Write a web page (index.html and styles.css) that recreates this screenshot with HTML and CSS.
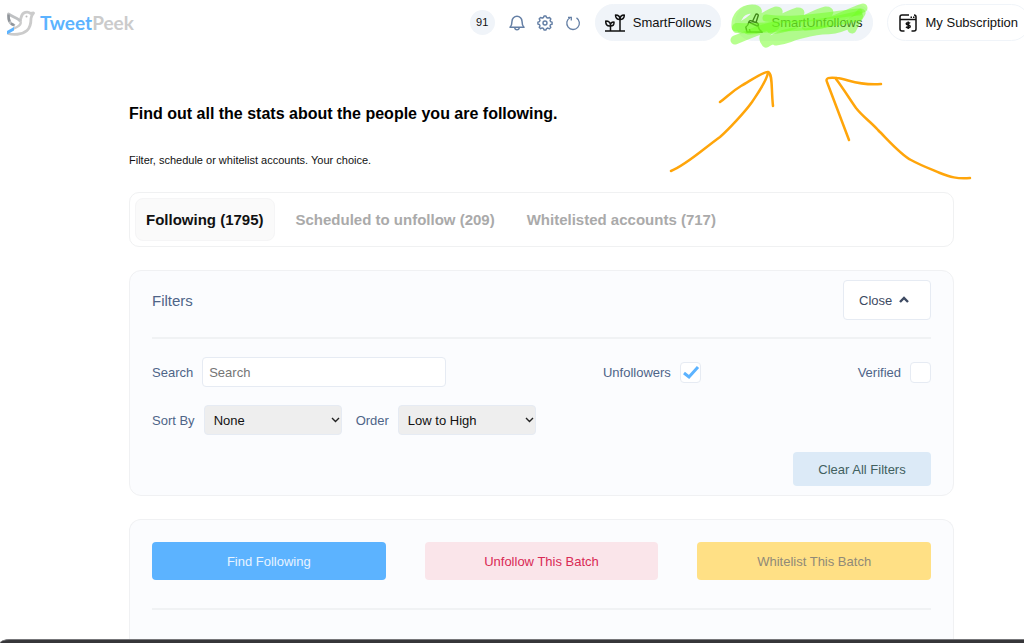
FILE: index.html
```html
<!DOCTYPE html>
<html lang="en">
<head>
    <meta charset="UTF-8">
    <meta name="viewport" content="width=device-width, initial-scale=1.0">
    <title>TweetPeek</title>
    <link rel="stylesheet" href="styles.css">
</head>
<body>
    <div class="page">
        <header class="header">
            <a href="#" class="logo">
                <svg class="logo-bird" width="30" height="26" viewBox="0 0 30 26" fill="none" stroke-width="2.800" stroke-linejoin="round">
                    <path d="M2 23.500c5 1.500 14 1.500 19-3 4-3.500 4-8 4-12 0-2 .8-3.500 2.500-5.500l-3 .3c-3-2.500-8-1-9 3L14 11" stroke="#cbcbcb"/>
                    <path d="M14.500 11.500C13 8.500 8 7.500 2.500 4c-.3 4 .3 7 2 9 1 1.500 2.500 2 4.500 2.500" stroke="#bfc1c3"/>
                    <path d="M14.500 10.500c1 3-.5 5-3.500 6.500l-4 2" stroke="#cbcbcb" stroke-width="2.200"/>
                    <path d="M2.500 4.500c0 3 .3 5 1 7M5 13.500l3 1.800" stroke="#8f949a" stroke-width="2.400"/>
                    <path d="M1 21l7-4v3.500l-7 4z" fill="#5cb3ff"/>
                    <circle cx="20.500" cy="6.500" r="1" fill="#bbb"/>
                </svg>
                <span class="logo-text">Tweet<span>Peek</span></span>
            </a>
            <nav class="nav">
                <span class="count">91</span>
                <button class="icon-btn" aria-label="Notifications">
                    <svg width="16" height="16" viewBox="0 0 16 16" fill="none" stroke="currentColor" stroke-width="1.500" stroke-linejoin="round">
                        <path d="M1 12.200c1.600-1.500 2-3 2-6a5 5 0 0 1 10 0c0 3 .4 4.500 2 6z"/>
                        <path d="M5.700 12.500c.3 3 4.300 3 4.600 0"/>
                    </svg>
                </button>
                <button class="icon-btn" aria-label="Settings">
                    <svg width="16" height="16" viewBox="0 0 16 16" fill="none" stroke="currentColor" stroke-width="1.400" stroke-linejoin="round">
                        <path d="M6.500 2.500 7 1h2l.5 1.500 1.500.7 1.500-.8 1.400 1.500-.8 1.500.5 1.300 1.500.5v2l-1.600.4-.5 1.300.8 1.500-1.400 1.400-1.500-.8-1.400.6L9 15H7l-.5-1.500-1.400-.6-1.500.8-1.400-1.400.8-1.500-.6-1.300L.9 9.100v-2l1.600-.5.5-1.300-.8-1.500 1.400-1.400 1.500.8z"/>
                        <circle cx="8" cy="8" r="2"/>
                    </svg>
                </button>
                <button class="icon-btn" aria-label="Refresh">
                    <svg width="16" height="16" viewBox="0 0 16 16" fill="none" stroke="currentColor" stroke-width="1.300">
                        <path d="M11.500 2.900a6.300 6.300 0 1 1-6.500-.2M3 2.300h3.300v3.300"/>
                    </svg>
                </button>
                <a href="#" class="pill">
                    <svg width="20" height="18" viewBox="0 0 20 18" fill="none" stroke="currentColor" stroke-width="1.500" stroke-linejoin="round">
                        <path d="M0 17h20M5.500 17v-6M15 17V5"/>
                        <path d="M5.500 12C2 12.500.7 10.500.7 7c3.300 0 5 1.500 4.800 5zM5.500 12c-.2-3 1-4 3.500-4 .2 3-1 4-3.500 4z"/>
                        <path d="M15 5.500c-3.500 0-4.500-1.500-4.500-4.500C14 1 15 2.500 15 5.500zM15 5.500C15 2.500 16 1 19.300 1c0 3-1 4.500-4.300 4.500z"/>
                    </svg>
                    SmartFollows
                </a>
                <a href="#" class="pill">
                    <svg width="18" height="20" viewBox="0 0 18 20" fill="none" stroke="currentColor" stroke-width="1.400" stroke-linejoin="round">
                        <path d="M7.500 8.500 10.500 2c.8-1.800 3.300-.8 2.600 1L11 9.500"/>
                        <path d="M7.500 8.500C6 7 4.500 7.500 3.800 9l9.500 4.500c.5-2-.5-3.500-2.300-4z"/>
                        <path d="M3.800 9C3.500 11.500 2.500 13 .8 14L2 19h15.200c-2.400-1.300-3.500-3-3.900-5.500M5.500 19c-.8-1-1-2-1-3"/>
                    </svg>
                    SmartUnfollows
                </a>
                <a href="#" class="pill pill-outline">
                    <svg width="18" height="18" viewBox="0 0 18 18" fill="none" stroke="currentColor" stroke-width="1.500">
                        <path d="M5.500 17H3a2 2 0 0 1-2-2V3a2 2 0 0 1 2-2h7M12.500 17H15a2 2 0 0 0 2-2V3a2 2 0 0 0-2-2M1 5.500h16M11.500 3.200H13M14 3.200h1.500"/>
                        <path d="M11.200 9.300c-1-.9-4-1-4 .5 0 1.700 4 .9 4 2.700 0 1.600-3 1.500-4.200.4M9.200 7.500V15"/>
                    </svg>
                    My Subscription
                </a>
            </nav>
        </header>

        <main class="content">
            <h1 class="title">Find out all the stats about the people you are following.</h1>
            <p class="subtitle">Filter, schedule or whitelist accounts. Your choice.</p>

            <div class="tabs">
                <button class="tab tab-active">Following (1795)</button>
                <button class="tab">Scheduled to unfollow (209)</button>
                <button class="tab">Whitelisted accounts (717)</button>
            </div>

            <section class="card filters">
                <div class="filters-head">
                    <h2>Filters</h2>
                    <button class="btn btn-close">
                        Close
                        <svg width="10" height="8" viewBox="0 0 10 8" fill="none" stroke="currentColor" stroke-width="2.400"><path d="M1 6l4-4 4 4"/></svg>
                    </button>
                </div>
                <div class="filters-row">
                    <div class="field">
                        <label for="search">Search</label>
                        <input type="text" id="search" class="search" placeholder="Search">
                    </div>
                    <div class="field">
                        <label for="unfollowers">Unfollowers</label>
                        <input type="checkbox" id="unfollowers" class="check" checked>
                    </div>
                    <div class="field">
                        <label for="verified">Verified</label>
                        <input type="checkbox" id="verified" class="check">
                    </div>
                </div>
                <div class="sort-row">
                    <div class="field">
                        <label for="sort">Sort By</label>
                        <select id="sort" class="select"><option>None</option></select>
                    </div>
                    <div class="field">
                        <label for="order">Order</label>
                        <select id="order" class="select"><option>Low to High</option><option>High to Low</option></select>
                    </div>
                </div>
                <div class="filters-foot">
                    <button class="btn btn-clear">Clear All Filters</button>
                </div>
            </section>

            <section class="card batch">
                <div class="batch-actions">
                    <button class="btn btn-find">Find Following</button>
                    <button class="btn btn-unfollow">Unfollow This Batch</button>
                    <button class="btn btn-whitelist">Whitelist This Batch</button>
                </div>
            </section>
        </main>

        <div class="bottom-bar"></div>

        <!-- highlighter and arrows over the nav -->
        <svg class="markup" width="374" height="190" viewBox="650 0 374 190" fill="none" stroke-linecap="round" stroke-linejoin="round">
            <g stroke="#70ff20" stroke-opacity="0.5">
                <path stroke-width="9" d="M736 27C735 17 742 9 752 9C765 9 752 21 739 27C744 32 762 16 776 11C786 11 758 25 748 30C766 31 782 16 797 12C808 11 783 25 771 29C789 31 812 14 826 11C836 11 816 22 806 26C828 26 846 13 863 8"/>
                <path stroke-width="9" d="M735 40C750 34 762 28 775 26C768 31 760 36 766 43C778 36 788 31 802 32C790 39 782 40 776 41C792 37 808 31 822 30C838 30 852 25 861 13C858 18 855 23 852 29"/>
                <path stroke-width="10" d="M737 28C762 29 776 26 796 26C817 25 838 21 858 16"/>
                <path stroke-width="7" d="M766 18C795 22 820 16 859 12"/>
            </g>
            <g stroke="#ffa50a" stroke-width="2.500">
                <path d="M671 171C686 165 702 150 720 137C728 130 745 112 752 102C758 93 766 82 768 73"/>
                <path d="M720 102C727 97 731 92 741 86C750 81 764 71 768 72C773 74 771 88 773 106"/>
                <path d="M836 79C843 88 851 101 856 108C863 117 870 121 878 130C889 141 901 155 911 160C920 165 928 168 940 173C950 177 957 179 970 178"/>
                <path d="M849 140C843 124 833 98 827 82C825 78 829 77 837 78C848 79 858 86 881 84"/>
            </g>
        </svg>
    </div>
</body>
</html>
```
FILE: styles.css
```css
* {
    margin: 0;
    padding: 0;
    box-sizing: border-box;
}

body {
    font-family: "Liberation Sans", Arial, sans-serif;
    font-size: 13px;
    background: #fff;
    color: #111;
}

button, input, select {
    font: inherit;
}

button {
    cursor: pointer;
}

.page {
    position: relative;
    display: flex;
    flex-direction: column;
    height: 100vh;
    overflow: hidden;
}

/* header */
.header {
    display: flex;
    justify-content: space-between;
    align-items: center;
    height: 45px;
    flex-shrink: 0;
    padding-left: 6px;
}

.logo {
    display: flex;
    align-items: center;
    gap: 4px;
    text-decoration: none;
}

.logo-text {
    font-family: Lato, sans-serif;
    font-size: 19px;
    font-weight: 700;
    color: #5cb3ff;
}

.logo-text span {
    color: #cbcbcb;
}

.nav {
    display: flex;
    align-items: center;
    gap: 14px;
    margin-right: -6px;
}

.count {
    width: 25px;
    height: 25px;
    border-radius: 50%;
    background: #f0f4f9;
    font-size: 11px;
    line-height: 25px;
    text-align: center;
}

.icon-btn {
    display: flex;
    border: none;
    background: none;
    color: #647fa5;
}

.icon-btn + .icon-btn {
    margin-left: -2px;
}

.pill {
    display: flex;
    align-items: center;
    gap: 8px;
    height: 37px;
    padding: 0 9px;
    border: 1px solid #f0f4f9;
    border-radius: 19px;
    background: #f0f4f9;
    color: #111;
    text-decoration: none;
    white-space: nowrap;
}

.pill-outline {
    gap: 9px;
    padding: 0 11px;
    background: #fff;
}

/* content */
.content {
    flex: 1;
    min-height: 0;
    margin: 0 70px 0 129px;
    display: flex;
    flex-direction: column;
}

.title {
    margin-top: 59px;
    font-size: 16px;
    line-height: 20px;
    color: #000;
}

.subtitle {
    margin-top: 28px;
    font-size: 11px;
    line-height: 16px;
}

.tabs {
    display: flex;
    gap: 10px;
    margin-top: 24px;
    padding: 5px;
    border: 1px solid #f0f1f2;
    border-radius: 10px;
}

.tab {
    height: 43px;
    padding: 0 10px;
    border: 1px solid transparent;
    border-radius: 8px;
    background: none;
    color: #aaa;
    font-size: 15px;
    font-weight: bold;
}

.tab-active {
    border-color: #f5f5f6;
    background: #fafafa;
    color: #111;
}

.card {
    margin-top: 23px;
    padding: 9px 22px;
    border: 1px solid #f0f1f3;
    border-radius: 12px;
    background: #fbfcfe;
    color: #4e6488;
}

.filters-head {
    display: flex;
    justify-content: space-between;
    align-items: center;
    padding-bottom: 17px;
    border-bottom: 2px solid #f0f2f4;
}

.filters-head h2 {
    font-size: 15px;
    font-weight: normal;
}

.btn {
    height: 38px;
    border: 1px solid transparent;
    border-radius: 4px;
}

.btn-close {
    display: flex;
    align-items: center;
    gap: 7px;
    width: 88px;
    height: 40px;
    padding: 0 15px;
    border-color: #e6ebf3;
    background: #fff;
    color: #3d4a62;
}

.filters-row {
    display: flex;
    justify-content: space-between;
    margin-top: 18px;
}

.sort-row {
    display: flex;
    gap: 14px;
    margin-top: 18px;
}

.field {
    display: flex;
    align-items: center;
    gap: 9px;
}

.search {
    width: 244px;
    height: 30px;
    padding: 0 6px;
    border: 1px solid #e6ebf3;
    border-radius: 4px;
    background: #fff;
}

.select {
    appearance: none;
    width: 138px;
    height: 30px;
    padding: 0 9px;
    border: 1px solid #e6ebf3;
    border-radius: 4px;
    background: #eee url("data:image/svg+xml,%3Csvg xmlns='http://www.w3.org/2000/svg' width='9' height='6' viewBox='0 0 9 6'%3E%3Cpath d='M1 1l3.500 3.500L8 1' fill='none' stroke='%23222' stroke-width='1.400'/%3E%3C/svg%3E") no-repeat right 1px center;
    color: #111;
}

.check {
    appearance: none;
    width: 21px;
    height: 21px;
    border: 1px solid #e6ebf3;
    border-radius: 4px;
    background: #fff;
}

.check:checked {
    background: #fff url("data:image/svg+xml,%3Csvg xmlns='http://www.w3.org/2000/svg' viewBox='0 0 19 19'%3E%3Cpath d='M3 10l5 4 9-10' fill='none' stroke='%235cb3ff' stroke-width='3'/%3E%3C/svg%3E");
}

.filters-foot {
    display: flex;
    justify-content: flex-end;
    margin-top: 17px;
}

.btn-clear {
    width: 138px;
    height: 34px;
    background: #dceaf7;
    color: #41605f;
}

.batch {
    flex: 1;
    min-height: 0;
    padding-top: 22px;
    border-bottom: none;
    border-radius: 12px 12px 0 0;
}

.batch-actions {
    display: grid;
    grid-template-columns: repeat(3, 1fr);
    gap: 39px;
    padding-bottom: 28px;
    border-bottom: 2px solid #f0f2f4;
}

.btn-find {
    background: #5cb3ff;
    color: #e8f4ff;
}

.btn-unfollow {
    background: #fae5ea;
    color: #d92a55;
}

.btn-whitelist {
    background: #ffe085;
    color: #908a78;
}

.bottom-bar {
    height: 4px;
    flex-shrink: 0;
    border-top: 1px solid #77777a;
    border-top-left-radius: 10px 4px;
    background: #363639;
}

.markup {
    position: absolute;
    top: 0;
    right: 0;
    pointer-events: none;
}
```
